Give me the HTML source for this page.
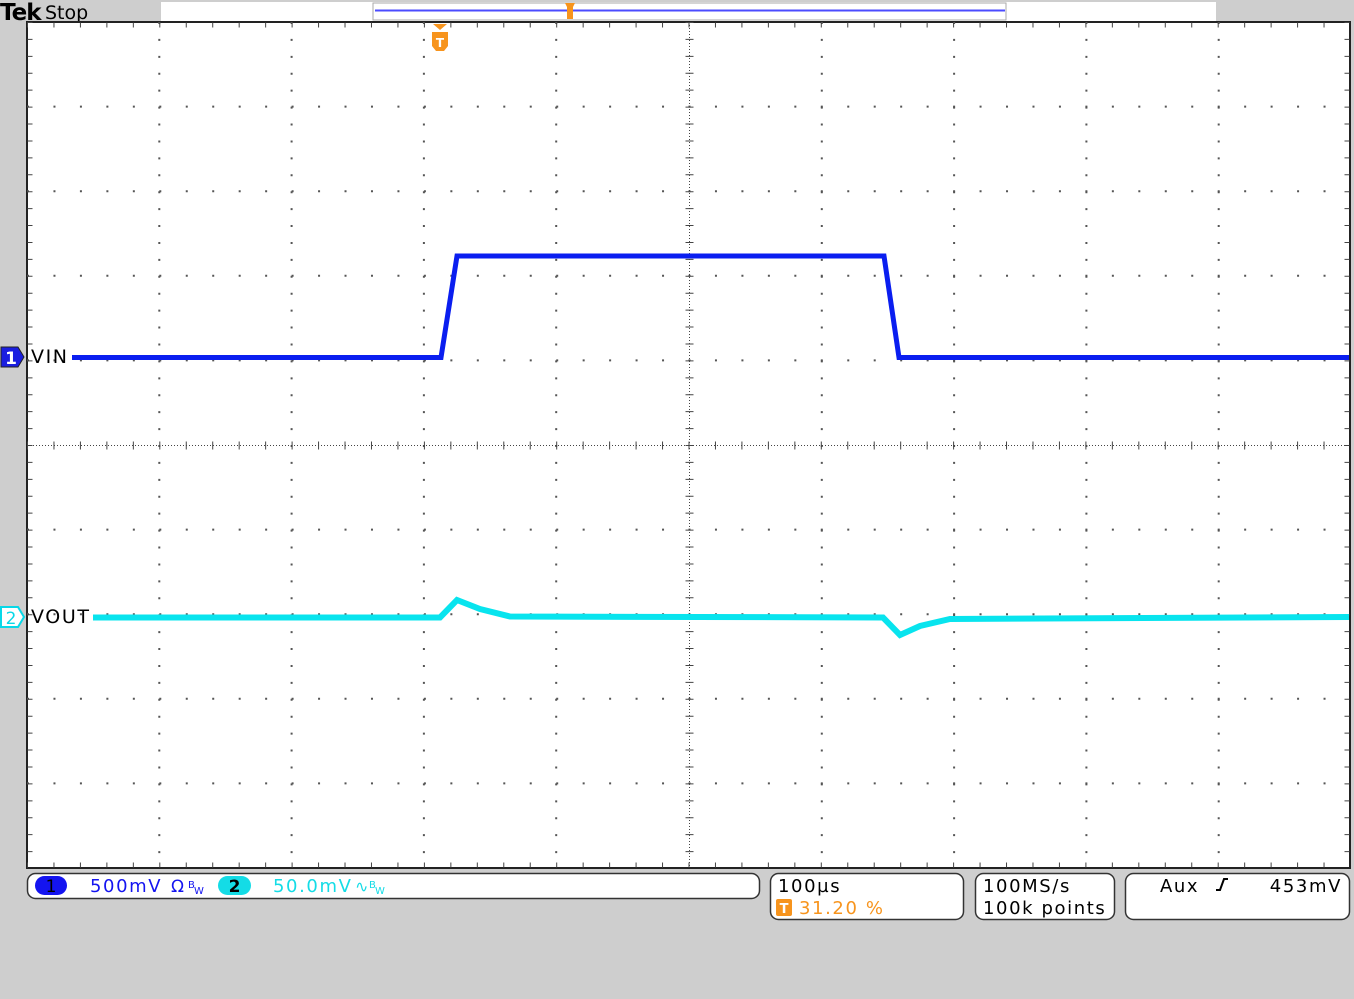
<!DOCTYPE html>
<html><head><meta charset="utf-8"><style>
html,body{margin:0;padding:0;background:#cecece;width:1354px;height:999px;overflow:hidden}
svg{display:block}
text{font-family:"DejaVu Sans","Liberation Sans",sans-serif}
.b{letter-spacing:1.6px}
</style></head><body>
<svg width="1354" height="999" viewBox="0 0 1354 999" xmlns="http://www.w3.org/2000/svg">
<rect width="1354" height="999" fill="#cecece"/>
<rect x="161" y="2" width="1055" height="19" fill="#fff"/>
<rect x="373" y="3" width="633" height="17" fill="#fff" stroke="#aaa" stroke-width="1"/>
<line x1="375" y1="10.5" x2="1005" y2="10.5" stroke="#4b4bff" stroke-width="2"/>
<path d="M565 3h10l-2 4v12h-6v-12z" fill="#f7941d"/>
<text x="0" y="20" font-family="Liberation Serif,serif" font-weight="bold" font-size="23" fill="#000" letter-spacing="-1">Tek</text>
<text x="45" y="19" font-size="19" fill="#000">Stop</text>
<rect x="27" y="22" width="1323" height="846" fill="#fff" stroke="#222" stroke-width="2"/>
<g stroke="#555" stroke-width="2" fill="none">
<g stroke-dasharray="2 14.92">
<line x1="159.3" y1="22" x2="159.3" y2="868"/><line x1="291.6" y1="22" x2="291.6" y2="868"/><line x1="423.9" y1="22" x2="423.9" y2="868"/><line x1="556.2" y1="22" x2="556.2" y2="868"/><line x1="821.8" y1="22" x2="821.8" y2="868"/><line x1="954.1" y1="22" x2="954.1" y2="868"/><line x1="1086.4" y1="22" x2="1086.4" y2="868"/><line x1="1218.7" y1="22" x2="1218.7" y2="868"/>
</g>
<g stroke-dasharray="2 24.46">
<line x1="27" y1="106.6" x2="1350" y2="106.6"/><line x1="27" y1="191.2" x2="1350" y2="191.2"/><line x1="27" y1="275.8" x2="1350" y2="275.8"/><line x1="27" y1="360.4" x2="1350" y2="360.4"/><line x1="27" y1="529.6" x2="1350" y2="529.6"/><line x1="27" y1="614.2" x2="1350" y2="614.2"/><line x1="27" y1="698.8" x2="1350" y2="698.8"/><line x1="27" y1="783.4" x2="1350" y2="783.4"/>
</g>
</g>
<g stroke="#444" stroke-width="1" fill="none">
<line x1="689.5" y1="22" x2="689.5" y2="868" stroke-dasharray="1 2"/>
<line x1="27" y1="445.5" x2="1350" y2="445.5" stroke-dasharray="1 2"/>
<line x1="689.5" y1="22" x2="689.5" y2="868" stroke-width="8" stroke-dasharray="1 15.92"/>
<line x1="27" y1="445.5" x2="1350" y2="445.5" stroke-width="8" stroke-dasharray="1 25.46"/>
<line x1="27" y1="25" x2="1350" y2="25" stroke-width="5" stroke-dasharray="1 25.46"/>
<line x1="27" y1="865" x2="1350" y2="865" stroke-width="5" stroke-dasharray="1 25.46"/>
<line x1="30" y1="22" x2="30" y2="868" stroke-width="5" stroke-dasharray="1 15.92"/>
<line x1="1347" y1="22" x2="1347" y2="868" stroke-width="5" stroke-dasharray="1 15.92"/>
</g>
<path d="M433 24h14l-7 6z" fill="#f7941d"/>
<path d="M432 32h16v14l-4 5h-8l-4-5z" fill="#f7941d"/>
<text x="440" y="47" font-size="12" font-weight="bold" fill="#fff" text-anchor="middle">T</text>
<polyline points="72,357.5 441,357.5 457,256 884,256 899,357.5 1349,357.5" fill="none" stroke="#0a1ef0" stroke-width="5"/>
<polyline points="93,617.5 440,617.5 457,600 480,609 510,616.5 883,617.5 900,635 920,626 950,619 1349,617" fill="none" stroke="#08e4ee" stroke-width="6"/>
<path d="M1 347h17l6 10-6 10h-17z" fill="#1a1ee0" stroke="#222" stroke-width="1"/>
<text x="11" y="364" font-size="17" font-weight="bold" fill="#fff" text-anchor="middle">1</text>
<text x="31" y="363" font-size="19" fill="#000" class="b">VIN</text>
<path d="M1 607h17l6 10-6 10h-17z" fill="#fff" stroke="#08d8e8" stroke-width="2"/>
<text x="11" y="624" font-size="17" fill="#08d8e8" text-anchor="middle">2</text>
<text x="31" y="623" font-size="19" fill="#000" class="b">VOUT</text>
<rect x="27.5" y="873.5" width="732" height="25" rx="8" fill="#fff" stroke="#333" stroke-width="1.5"/>
<rect x="35" y="876" width="32" height="19" rx="9.5" fill="#1414f0"/>
<text x="51" y="892" font-size="17" fill="#000" text-anchor="middle">1</text>
<text x="90" y="892" font-size="18" fill="#1414f0" class="b">500mV</text>
<text x="171" y="892" font-size="17" fill="#1414f0">Ω</text><text x="188" y="888" font-size="10" fill="#1414f0">B</text><text x="194" y="894" font-size="10" fill="#1414f0">W</text>
<rect x="218" y="876" width="33" height="19" rx="9.5" fill="#14dce6"/>
<text x="234.5" y="892" font-size="17" fill="#000" font-weight="bold" text-anchor="middle">2</text>
<text x="273" y="892" font-size="18" fill="#14dce6" class="b">50.0mV</text>
<text x="355" y="892" font-size="16" fill="#14dce6">∿</text><text x="369" y="888" font-size="10" fill="#14dce6">B</text><text x="375" y="894" font-size="10" fill="#14dce6">W</text>
<rect x="770.5" y="873.5" width="193" height="46" rx="8" fill="#fff" stroke="#333" stroke-width="1.5"/>
<text x="778" y="892" font-size="18" fill="#000" class="b">100µs</text>
<rect x="776" y="899" width="16" height="17" rx="2" fill="#f7941d"/>
<text x="784" y="913" font-size="13" fill="#fff" font-weight="bold" text-anchor="middle">T</text>
<text x="799" y="914" font-size="18" fill="#f7941d" class="b">31.20 %</text>
<rect x="975.5" y="873.5" width="139" height="46" rx="8" fill="#fff" stroke="#333" stroke-width="1.5"/>
<text x="983" y="892" font-size="18" fill="#000" class="b">100MS/s</text>
<text x="983" y="914" font-size="18" fill="#000" class="b">100k points</text>
<rect x="1125.5" y="873.5" width="224" height="46" rx="8" fill="#fff" stroke="#333" stroke-width="1.5"/>
<text x="1160" y="892" font-size="18" fill="#000" class="b">Aux</text>
<path d="M1216 890h4l4-11h4" fill="none" stroke="#000" stroke-width="2"/>
<text x="1342" y="892" font-size="18" fill="#000" text-anchor="end" class="b">453mV</text>
</svg>
</body></html>
